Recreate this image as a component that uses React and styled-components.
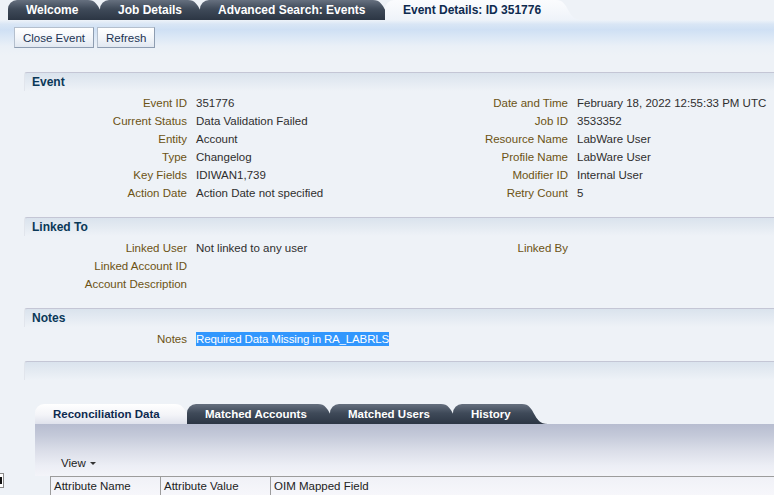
import React from 'react';
import styled, { createGlobalStyle } from 'styled-components';

const GlobalStyle = createGlobalStyle`
  html, body {
    margin: 0;
    padding: 0;
    background: #eef2f7;
    overflow: hidden;
  }
  body {
    font-family: "Liberation Sans", Arial, sans-serif;
    font-size: 11.5px;
    color: #333;
  }
`;

const Page = styled.div`
  position: relative;
  width: 774px;
  height: 495px;
  overflow: hidden;
  background: #eef2f7;
`;

const TabBar = styled.div`
  display: flex;
  align-items: flex-end;
  height: 20px;
  padding-left: ${(p) => p.$indent || 0}px;
`;

const Tab = styled.div`
  position: relative;
  flex: none;
  box-sizing: border-box;
  width: ${(p) => p.$w}px;
  height: 20px;
  margin-right: 12px;
  padding-left: 18px;
  line-height: 21px;
  font-size: ${(p) => p.$size || 12}px;
  font-weight: bold;
  white-space: nowrap;
  border-top-left-radius: 9px;
  color: ${(p) => (p.$active ? '#0e2a4f' : '#ffffff')};
  background: ${(p) =>
    p.$active
      ? p.$light
        ? 'linear-gradient(#ffffff, #f3f4f8 55%, #dfe2ec)'
        : 'linear-gradient(#fbfcfe, #f4f7fb 60%, #eef3f9)'
      : 'linear-gradient(#66707f, #3f4a59 45%, #2c3644)'};

  &::after {
    content: '';
    position: absolute;
    top: 0;
    right: -26px;
    width: 26px;
    height: 20px;
    background: inherit;
    clip-path: path('M0 0 C14 0 10 20 26 20 L0 20 Z');
  }
`;

const Toolbar = styled.div`
  display: flex;
  gap: 3px;
  height: 35px;
  box-sizing: border-box;
  padding: 7px 0 0 14px;
  background: linear-gradient(
    #eef3f9 0%,
    #d9e6f5 12%,
    #cfe0f4 28%,
    #dce8f6 50%,
    #eaf0f7 75%,
    #eef2f7 100%
  );
`;

const Button = styled.button`
  height: 21px;
  padding: 0 ${(p) => p.$pad || 8}px;
  font-family: "Liberation Sans", Arial, sans-serif;
  font-size: 11.5px;
  color: #1b3352;
  background: linear-gradient(#ffffff, #f3f6fa 50%, #e1e8f1);
  border: 1px solid #b4bfcd;
  border-right-color: #8e9db1;
  border-bottom-color: #8e9db1;
  border-radius: 0;
  cursor: pointer;
`;

const Content = styled.div`
  padding: 17px 0 0 24px;
`;

const Section = styled.section`
  margin-bottom: ${(p) => (p.$mb == null ? 15 : p.$mb)}px;
`;

const SectionHeader = styled.div`
  height: 18px;
  line-height: 18px;
  padding-left: 7px;
  border-top: 1px solid #c4c6d5;
  border-left: 1px solid #e1e5ec;
  border-top-left-radius: 3px;
  background: linear-gradient(#dae3ed, #e2e9f1 40%, #eef2f7);
  font-size: 12px;
  font-weight: bold;
  color: #0a3858;
`;

const Columns = styled.div`
  display: grid;
  grid-template-columns: 381px 1fr;
  padding-top: 3px;
`;

const Column = styled.div`
  display: flex;
  flex-direction: column;
`;

const Field = styled.div`
  display: grid;
  grid-template-columns: 163px 1fr;
  column-gap: 9px;
  height: 18px;
  line-height: 18px;
  white-space: nowrap;
`;

const Label = styled.span`
  text-align: right;
  color: #6c5314;
`;

const Value = styled.span`
  color: #2e2e2e;
`;

const Selected = styled.span`
  display: inline-block;
  line-height: 14px;
  letter-spacing: -0.15px;
  background: #3297fd;
  color: #fff;
`;

const BottomTabs = styled.div`
  margin: 24px 0 0 11px;
`;

const Panel = styled.div`
  height: 52px;
  box-sizing: border-box;
  padding: 32px 0 0 26px;
  background: linear-gradient(
    #b7bdd0 0%,
    #c4c9d9 22%,
    #dadde8 50%,
    #eceef5 80%,
    #f3f4f9 100%
  );
  color: #222;
  line-height: 14px;
`;

const Caret = styled.span`
  display: inline-block;
  margin-left: 4px;
  vertical-align: middle;
  border-left: 3px solid transparent;
  border-right: 3px solid transparent;
  border-top: 3px solid #333;
`;

const Table = styled.div`
  display: flex;
  margin-left: 15px;
  height: 19px;
  border-top: 1px solid #9c9c9c;
  border-left: 1px solid #9c9c9c;
  background: linear-gradient(#f0f1f7, #f7f7fb);
`;

const HeaderCell = styled.div`
  box-sizing: border-box;
  width: ${(p) => (p.$w ? `${p.$w}px` : 'auto')};
  flex: ${(p) => (p.$w ? 'none' : '1')};
  padding-left: 3px;
  line-height: 19px;
  border-right: ${(p) => (p.$w ? '1px solid #9c9c9c' : 'none')};
  color: #222;
  white-space: nowrap;
`;

const Splitter = styled.div`
  position: absolute;
  left: 0;
  top: 473px;
  width: 3px;
  height: 13px;
  background: #fff;
  border: 1px solid #8a8a8a;
  border-left: none;

  &::before {
    content: '';
    position: absolute;
    left: 0;
    top: 3px;
    width: 2px;
    height: 7px;
    background: #111;
  }
`;

const eventLeft = [
  ['Event ID', '351776'],
  ['Current Status', 'Data Validation Failed'],
  ['Entity', 'Account'],
  ['Type', 'Changelog'],
  ['Key Fields', 'IDIWAN1,739'],
  ['Action Date', 'Action Date not specified'],
];

const eventRight = [
  ['Date and Time', 'February 18, 2022 12:55:33 PM UTC'],
  ['Job ID', '3533352'],
  ['Resource Name', 'LabWare User'],
  ['Profile Name', 'LabWare User'],
  ['Modifier ID', 'Internal User'],
  ['Retry Count', '5'],
];

const linkedLeft = [
  ['Linked User', 'Not linked to any user'],
  ['Linked Account ID', ''],
  ['Account Description', ''],
];

const FieldList = ({ rows }) => (
  <Column>
    {rows.map(([label, value]) => (
      <Field key={label}>
        <Label>{label}</Label>
        <Value>{value}</Value>
      </Field>
    ))}
  </Column>
);

const App = () => {
  return (
    <>
      <GlobalStyle />
      <Page>
        <TabBar $indent={8}>
          <Tab $w={80}>Welcome</Tab>
          <Tab $w={88}>Job Details</Tab>
          <Tab $w={173}>Advanced Search: Events</Tab>
          <Tab $w={171} $active>
            Event Details: ID 351776
          </Tab>
        </TabBar>

        <Toolbar>
          <Button $pad={8}>Close Event</Button>
          <Button>Refresh</Button>
        </Toolbar>

        <Content>
          <Section>
            <SectionHeader>Event</SectionHeader>
            <Columns>
              <FieldList rows={eventLeft} />
              <FieldList rows={eventRight} />
            </Columns>
          </Section>

          <Section>
            <SectionHeader>Linked To</SectionHeader>
            <Columns>
              <FieldList rows={linkedLeft} />
              <FieldList rows={[['Linked By', '']]} />
            </Columns>
          </Section>

          <Section $mb={13}>
            <SectionHeader>Notes</SectionHeader>
            <Columns>
              <Column>
                <Field>
                  <Label>Notes</Label>
                  <Value>
                    <Selected>Required Data Missing in RA_LABRLS</Selected>
                  </Value>
                </Field>
              </Column>
            </Columns>
          </Section>

          <Section $mb={0}>
            <SectionHeader />
          </Section>

          <BottomTabs>
            <TabBar>
              <Tab $w={140} $size={11.5} $active $light>
                Reconciliation Data
              </Tab>
              <Tab $w={131} $size={11.5}>Matched Accounts</Tab>
              <Tab $w={111} $size={11.5}>Matched Users</Tab>
              <Tab $w={69} $size={11.5}>History</Tab>
            </TabBar>
            <Panel>
              View
              <Caret />
            </Panel>
            <Table>
              <HeaderCell $w={110}>Attribute Name</HeaderCell>
              <HeaderCell $w={110}>Attribute Value</HeaderCell>
              <HeaderCell>OIM Mapped Field</HeaderCell>
            </Table>
          </BottomTabs>
        </Content>

        <Splitter />
      </Page>
    </>
  );
};

export default App;
